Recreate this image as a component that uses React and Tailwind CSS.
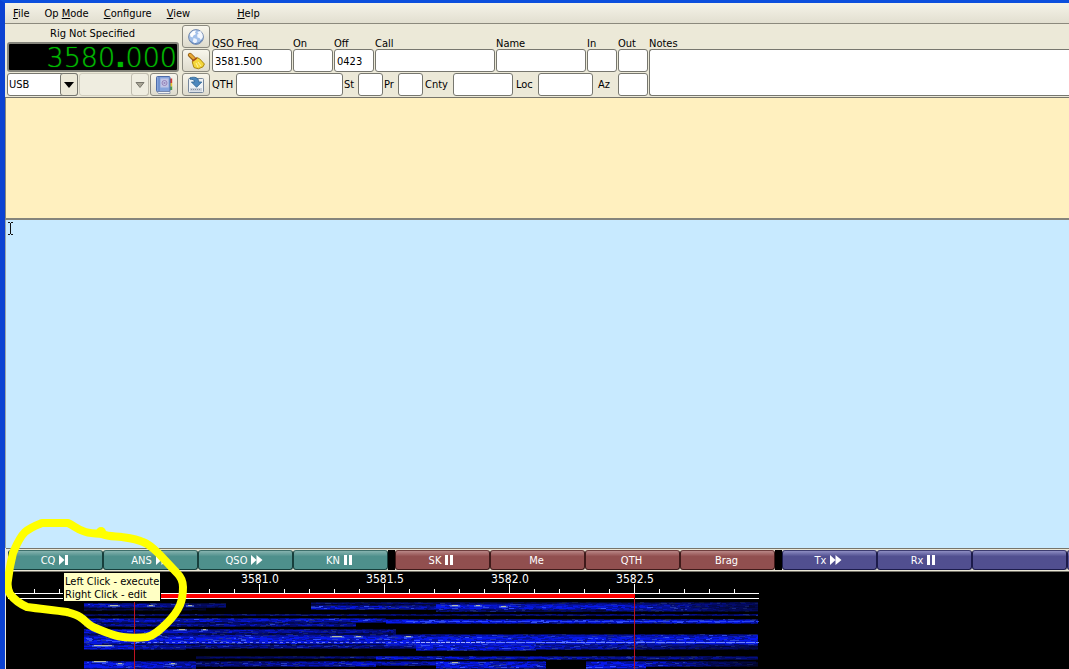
import React from "react";

const field =
  "h-[23px] min-w-0 shrink-0 rounded-[3px] border border-[#77776f] bg-white px-[2px] pt-[2px] text-[11px] text-black outline-none";
const toolButton =
  "flex h-[23px] w-7 shrink-0 items-center justify-center rounded-[3px] border border-[#8a897f] bg-gradient-to-b from-[#f8f6ec] to-[#dedbcd]";

function Globe() {
  return (
    <svg width="18" height="18" viewBox="0 0 18 18" aria-hidden="true">
      <circle cx="9" cy="9" r="7.4" fill="#a3c1ea" stroke="#7489ad" />
      <path d="M3 6l3-3 3-.6-1 2.4 1 1.2-2.6 1.6-1 2-2-1z" fill="#fff" />
      <path d="M10.4 4l3-1 2 3 .5 3-2 3-1.4-2-2-.6-.4-3 1.6-.4z" fill="#f4f8ff" />
      <path d="M6.6 10l3 1 .6 2-2 3-2.4-2z" fill="#eef4ff" />
      <path d="M3 12.6a7 7 0 0012-1" fill="none" stroke="#6386bb" />
    </svg>
  );
}

function Broom() {
  return (
    <svg width="20" height="20" viewBox="0 0 20 20" aria-hidden="true">
      <path d="M4 4L8 8" stroke="#8f5a14" strokeWidth="4.4" strokeLinecap="round" />
      <path d="M4 3.800L8 7.600" stroke="#e7a834" strokeWidth="2.600" strokeLinecap="round" />
      <path d="M6.2 10.6l5-4 2.400 1.200 4.800 5.200-1.400 2.800-4.600 2-4.400-1.200-1-3z" fill="#f4d73b" stroke="#a9850d" />
      <path d="M10 12l2 4m0-5l3 4" stroke="#fff3a0" />
      <path d="M6.400 10.200l4.600-3.400" stroke="#a84a18" strokeWidth="1.600" />
    </svg>
  );
}

function SaveIn() {
  return (
    <svg width="18" height="18" viewBox="0 0 18 18" aria-hidden="true">
      <rect x="1.500" y="2.500" width="15" height="14" rx="1" fill="#eef2f6" stroke="#76879c" />
      <rect x="3" y="12" width="12" height="3.500" fill="#c9d0d8" />
      <path d="M4 13.500h10" stroke="#8791a0" strokeDasharray="1 1" />
      <path d="M3 1.800C7.500 .4 11.800 1.500 11.800 6h3L9.600 11.300 4.400 6h3C7.400 4 6 3 3 3.200z" fill="#4c87bd" stroke="#29618f" strokeWidth=".8" />
    </svg>
  );
}

function Book() {
  return (
    <svg width="20" height="20" viewBox="0 0 20 20" aria-hidden="true">
      <path d="M16 3.500h2.200V8H16z" fill="#d33a32" />
      <path d="M16 8h2.200v3.500H16z" fill="#e8c22c" />
      <path d="M16 11.500h2.200V15H16z" fill="#4ca043" />
      <rect x="2.500" y="1.500" width="13.500" height="15" rx="1" fill="#86a5dc" stroke="#4d6ba9" />
      <path d="M3 16.500h13v2H4.500z" fill="#f3f3f3" stroke="#5d6e96" strokeWidth=".6" />
      <path d="M5 2v14" stroke="#5e80c2" />
      <rect x="6.500" y="3.500" width="8" height="9" fill="#c1c5e6" />
      <circle cx="10.500" cy="8" r="2.500" fill="none" stroke="#9783b8" />
      <circle cx="10.500" cy="8" r="1" fill="#9783b8" />
    </svg>
  );
}

function Glyph({ kind }) {
  const shapes = {
    skip: "M0 0l5.500 5L0 10zM6 0h3v10H6z",
    forward: "M0 0l5.500 5L0 10zM5.500 0L11.500 5 5.500 10z",
    pause: "M0 0h3v10H0zM5 0h3v10H5z",
  };
  return (
    <svg className="ml-1" width={kind === "forward" ? 12 : 9} height="10" aria-hidden="true">
      <path d={shapes[kind]} fill="#fff" />
    </svg>
  );
}

const macroGroups = [
  {
    look: "border-[#173f3c] border-t-[#3d6f6b] from-[#86b3af] via-[#4e908c] to-[#4e908c]",
    keys: [["CQ", "skip"], ["ANS", "forward"], ["QSO", "forward"], ["KN", "pause"]],
  },
  {
    look: "border-[#3f1a1a] border-t-[#6f3d3d] from-[#b98787] via-[#914f4f] to-[#914f4f]",
    keys: [["SK", "pause"], ["Me"], ["QTH"], ["Brag"]],
  },
  {
    look: "border-[#1c1b4b] border-t-[#3c3b70] from-[#8e8dc2] via-[#514f90] to-[#514f90]",
    keys: [["Tx", "forward"], ["Rx", "pause"], [""], [""]],
  },
];

function MacroBar() {
  return (
    <div className="h-6 shrink-0 overflow-hidden border-y border-[#77756b] bg-[#ece9d8] py-px pl-[2px]">
      <div className="flex gap-[7px] bg-black">
        {macroGroups.map((group, g) => (
          <div key={g} className="flex shrink-0 bg-[#ece9d8]">
            {group.keys.map(([label, kind], i) => (
              <button
                key={i}
                type="button"
                aria-label={label || "Unassigned macro"}
                className={`flex h-5 w-[95px] shrink-0 items-center justify-center rounded-[3px] border bg-linear-to-b via-30% pr-[2px] text-[11px] leading-none text-white ${group.look}`}
              >
                {label}
                {kind && <Glyph kind={kind} />}
              </button>
            ))}
          </div>
        ))}
      </div>
    </div>
  );
}

// Each band: top row, rows, start x, end x, brightness at the left and the right.
const bands = [
  [2, 5, 78, 220, 0.9, 0.45],
  [7, 3, 78, 200, 0.4, 0.2],
  [1, 3, 305, 752, 0.5, 0.5],
  [4, 5, 305, 430, 0.9, 0.7],
  [3, 6, 430, 600, 1, 0.95],
  [3, 7, 600, 752, 0.9, 0.3],
  [9, 2, 430, 752, 0.5, 0.2],
  [13, 2, 78, 752, 0.4, 0.5],
  [17, 5, 78, 380, 0.8, 0.85],
  [18, 5, 380, 752, 1, 0.9],
  [22, 4, 78, 350, 0.65, 0.7],
  [28, 5, 78, 180, 1, 0.8],
  [28, 5, 180, 390, 0.8, 0.6],
  [33, 3, 78, 752, 0.7, 0.8],
  [35, 7, 78, 280, 1, 1],
  [35, 7, 280, 752, 1, 1],
  [41, 2, 78, 752, 0.8, 1],
  [42, 3, 380, 752, 0.8, 0.6],
  [43, 6, 78, 180, 1, 0.6],
  [43, 5, 180, 420, 0.6, 0.6],
  [43, 7, 410, 530, 0.95, 0.85],
  [44, 5, 530, 752, 0.85, 0.3],
  [55, 3, 190, 370, 0.4, 0.6],
  [55, 4, 370, 752, 0.95, 0.5],
  [60, 8, 78, 190, 1, 0.8],
  [60, 6, 190, 370, 0.5, 0.85],
  [60, 5, 370, 430, 0.75, 0.75],
  [60, 8, 430, 540, 1, 0.9],
  [60, 8, 580, 640, 1, 0.95],
  [60, 6, 640, 752, 0.85, 0.2],
];

const sparks = [
  [104, 4, 8], [143, 4, 4], [182, 4, 4], [92, 29, 8], [88, 44, 18],
  [88, 60, 12], [112, 62, 4], [165, 62, 4], [326, 35, 10], [350, 35, 5], [400, 35, 5], [446, 4, 6],
  [470, 4, 4], [495, 5, 5], [446, 61, 6], [197, 28, 3], [173, 28, 6],
];

function streaks() {
  let seed = 77;
  const rnd = () => ((seed = (seed * 1103515245 + 12345) % 2147483648) / 2147483648);
  const out = [];
  bands.forEach(([top, rows, from, to, a, b]) => {
    for (let r = 0; r < rows; r++) {
      const edge = rows > 2 && (r === 0 || r === rows - 1) ? 0.6 : 1;
      let x = from;
      while (x < to) {
        const w = Math.min(2 + Math.floor(rnd() * 5), to - x);
        const level = edge * (a + ((b - a) * (x - from)) / (to - from)) * (0.6 + rnd() * 0.6);
        if (level > 0.1) {
          out.push([x, top + r, w, Math.min(level, 1), rnd() > 0.9 ? "#3350ff" : "#0719ee"]);
        }
        x += w;
      }
    }
  });
  return out;
}

function Waterfall() {
  const ticks = Array.from({ length: 30 }, (_, i) => 28 + i * 25).filter((x) => x < 750);
  return (
    <svg className="block" width="1063" height="97" role="img" aria-label="Waterfall display">
      <rect width="1063" height="97" fill="#000" />
      <g transform="translate(0 29)">
        {streaks().map(([x, y, w, o, c], i) => (
          <rect key={i} x={x} y={y} width={w} height="1" fill={c} opacity={o} />
        ))}
        {sparks.map(([x, y, w], i) => (
          <g key={i}>
            <rect x={x - 2} y={y} width={w + 4} height="2" fill="#5a78e8" opacity=".6" />
            <rect x={x} y={y} width={w} height="1" fill="#d5d79c" opacity=".8" />
          </g>
        ))}
        <path d="M130 41.500h280" stroke="#8f9fff" strokeDasharray="3 3" opacity=".7" />
        <path d="M410 41.500h70" stroke="#b4bfff" strokeDasharray="4 1" opacity=".9" />
        <path d="M480 41.500h273" stroke="#6d84ff" strokeDasharray="9 1" />
        <path d="M400 20.500h353" stroke="#3350ff" strokeDasharray="12 2" opacity=".8" />
      </g>
      {ticks.map((x) => (
        <path key={x} d={`M${x + 0.5} ${(x - 3) % 125 === 0 ? 12 : 17}V21`} stroke="#fff" />
      ))}
      <path d="M2 21.500h751M2 26.500h751" stroke="#fff" />
      <rect x="128" y="22" width="501" height="4" fill="#f00" />
      <path d="M128.500 26v71M628.500 26v71" stroke="#c01420" />
      <g fill="#fff" fontSize="12" textAnchor="middle">
        <text x="254" y="11">3581.0</text>
        <text x="379" y="11">3581.5</text>
        <text x="504" y="11">3582.0</text>
        <text x="629" y="11">3582.5</text>
      </g>
    </svg>
  );
}

function Cell({ id, label, className, value = "" }) {
  return (
    <div className="flex shrink-0 flex-col">
      <label htmlFor={id} className="h-[13px] leading-[15px]">{label}</label>
      <input id={id} defaultValue={value} className={`${field} ${className}`} />
    </div>
  );
}

function Inline({ id, label, labelClass, className }) {
  return (
    <>
      <label htmlFor={id} className={`shrink-0 pt-[2px] ${labelClass}`}>{label}</label>
      <input id={id} className={`${field} ${className}`} />
    </>
  );
}

function Menu({ before = "", mnemonic, after, className = "" }) {
  return (
    <button type="button" className={className}>
      {before}
      <span className="underline underline-offset-1">{mnemonic}</span>
      {after}
    </button>
  );
}

export default function App() {
  return (
    <div className="relative flex min-h-screen flex-col overflow-hidden border-t-3 border-l-5 border-[#0c4fdd] border-l-[#0b42d2] bg-[#ece9d8] font-['DejaVu_Sans_Condensed','DejaVu_Sans',sans-serif] text-[11px] text-black">
      <nav className="flex h-[21px] shrink-0 items-center gap-[15px] border-b border-[#8b897d] bg-gradient-to-b from-[#f5f3e8] to-[#e2dfd0] pt-[2px] pl-2">
        <Menu mnemonic="F" after="ile" />
        <Menu before="Op " mnemonic="M" after="ode" />
        <Menu mnemonic="C" after="onfigure" />
        <Menu mnemonic="V" after="iew" />
        <Menu mnemonic="H" after="elp" className="ml-8" />
      </nav>

      <header className="flex h-[74px] shrink-0 overflow-hidden border-b border-[#77756b] pl-[2px]">
        <section className="flex w-[175px] shrink-0 flex-col">
          <div className="h-[18px] w-[171px] pt-px text-center leading-[18px]">Rig Not Specified</div>
          <div className="flex h-[30px] w-[172px] items-center justify-end overflow-hidden rounded-[3px] border-2 border-[#85857c] bg-black font-['DejaVu_Sans'] text-[27px] leading-none font-extralight">
            <span className="text-[#00b800] text-shadow-[0_0_1px_#009400]">
              3580<span className="font-bold">.</span>000
            </span>
          </div>
          <div className="mt-px flex h-[23px]">
            <div className="relative flex w-[71px] shrink-0">
              <select
                aria-label="Rig mode"
                className="h-[23px] w-full appearance-none rounded-[3px] border border-[#77776f] bg-white pt-px pl-px text-[11px]"
              >
                <option>USB</option>
              </select>
              <span className="pointer-events-none absolute inset-y-0 right-0 flex w-[18px] items-center justify-center rounded-[3px] border border-[#77776f] bg-[#ece9d8]">
                <svg width="10" height="6" aria-hidden="true"><path d="M0 0h10L5 6z" /></svg>
              </span>
            </div>
            <div className="relative ml-px flex w-[70px] shrink-0">
              <select
                aria-label="Bandwidth"
                disabled
                className="h-[23px] w-full appearance-none rounded-[3px] border border-[#cfccbd] bg-[#efede0]"
              />
              <span className="pointer-events-none absolute inset-y-0 right-0 flex w-[18px] items-center justify-center rounded-[3px] border border-[#bfbcae]">
                <svg width="10" height="6" aria-hidden="true"><path d="M1 .5h8L5 5.500z" fill="#aaa797" stroke="#77756b" /></svg>
              </span>
            </div>
            <button type="button" aria-label="Frequency list" className={`${toolButton} ml-px`}>
              <Book />
            </button>
          </div>
        </section>

        <div className="flex w-[30px] shrink-0 flex-col gap-px pt-px">
          <button type="button" aria-label="Look up call" className={toolButton}><Globe /></button>
          <button type="button" aria-label="Clear fields" className={toolButton}><Broom /></button>
          <button type="button" aria-label="Save contact" className={toolButton}><SaveIn /></button>
        </div>

        <section className="flex shrink-0 flex-col">
          <div className="flex gap-px pt-3">
            <Cell id="freq" label="QSO Freq" value="3581.500" className="w-20" />
            <Cell id="on" label="On" className="w-10" />
            <Cell id="off" label="Off" value="0423" className="w-10" />
            <Cell id="call" label="Call" className="w-[120px]" />
            <Cell id="name" label="Name" className="w-[90px]" />
            <Cell id="in" label="In" className="w-[30px]" />
            <Cell id="out" label="Out" className="w-[30px]" />
          </div>
          <div className="mt-px flex items-center">
            <Inline id="qth" label="QTH" labelClass="w-6" className="w-[107px]" />
            <Inline id="st" label="St" labelClass="w-[15px] pl-px" className="w-[25px]" />
            <Inline id="pr" label="Pr" labelClass="w-[15px] pl-px" className="w-[25px]" />
            <Inline id="cnty" label="Cnty" labelClass="w-[30px] pl-[2px]" className="w-[60px]" />
            <Inline id="loc" label="Loc" labelClass="w-[25px] pl-[3px]" className="w-[55px]" />
            <Inline id="az" label="Az" labelClass="w-[25px] pl-[5px]" className="w-[30px]" />
          </div>
        </section>

        <section className="ml-px flex min-w-0 flex-1 flex-col pt-3">
          <label htmlFor="notes" className="h-[13px] leading-[15px]">Notes</label>
          <textarea
            id="notes"
            className="h-[47px] w-full resize-none rounded-l-[3px] border border-r-0 border-[#77776f] bg-white outline-none"
          />
        </section>
      </header>

      <textarea
        aria-label="Received text"
        className="block h-[122px] shrink-0 resize-none border-b-2 border-l border-[#85857c] bg-[#fff0bf] outline-none"
      />
      <div className="relative flex flex-1">
        <textarea
          aria-label="Transmit text"
          className="flex-1 resize-none border-l border-[#9aa6a8] bg-[#c8eaff] outline-none"
        />
        <svg className="absolute top-[2px] left-[2px]" width="7" height="13" aria-hidden="true">
          <path d="M1 .5h2M4 .5h2M3.500 1v11M1 12.500h2M4 12.500h2" stroke="#111" fill="none" />
        </svg>
      </div>

      <div className="relative shrink-0 pl-px">
        <MacroBar />
        <div className="overflow-hidden bg-black">
          <Waterfall />
        </div>
        <div
          role="tooltip"
          className="absolute top-6 left-[58px] border border-black bg-[#ffffc4] px-px pt-[2px] leading-[13px] whitespace-nowrap"
        >
          Left Click - execute
          <br />
          Right Click - edit
        </div>
        <svg className="pointer-events-none absolute -top-8 left-0" width="190" height="130" aria-hidden="true">
          <path
            d="M37 7H63C68 9 72 13 78 15C84 18 91 17 97 18C104 21 111 20 117 21C124 22 132 23 138 26C146 29 151 35 155 39L172 57C177 62 178 66 178 71C178 78 177 84 175 89C172 96 167 102 162 107C156 113 150 119 142 121C134 122 126 122 118 121C108 120 98 115 88 111C82 108 80 104 75 101C71 98 66 97 62 96C48 94 36 93 22 91C13 87 8 82 5 78C3 74 2 69 3 64C4 55 6 45 8 37C11 30 14 22 20 16C26 11 32 9 37 7Z"
            fill="none"
            stroke="#ff0"
            strokeWidth="8"
            strokeLinejoin="round"
          />
          <circle cx="96" cy="16" r="5" fill="#ff0" />
        </svg>
      </div>
    </div>
  );
}
